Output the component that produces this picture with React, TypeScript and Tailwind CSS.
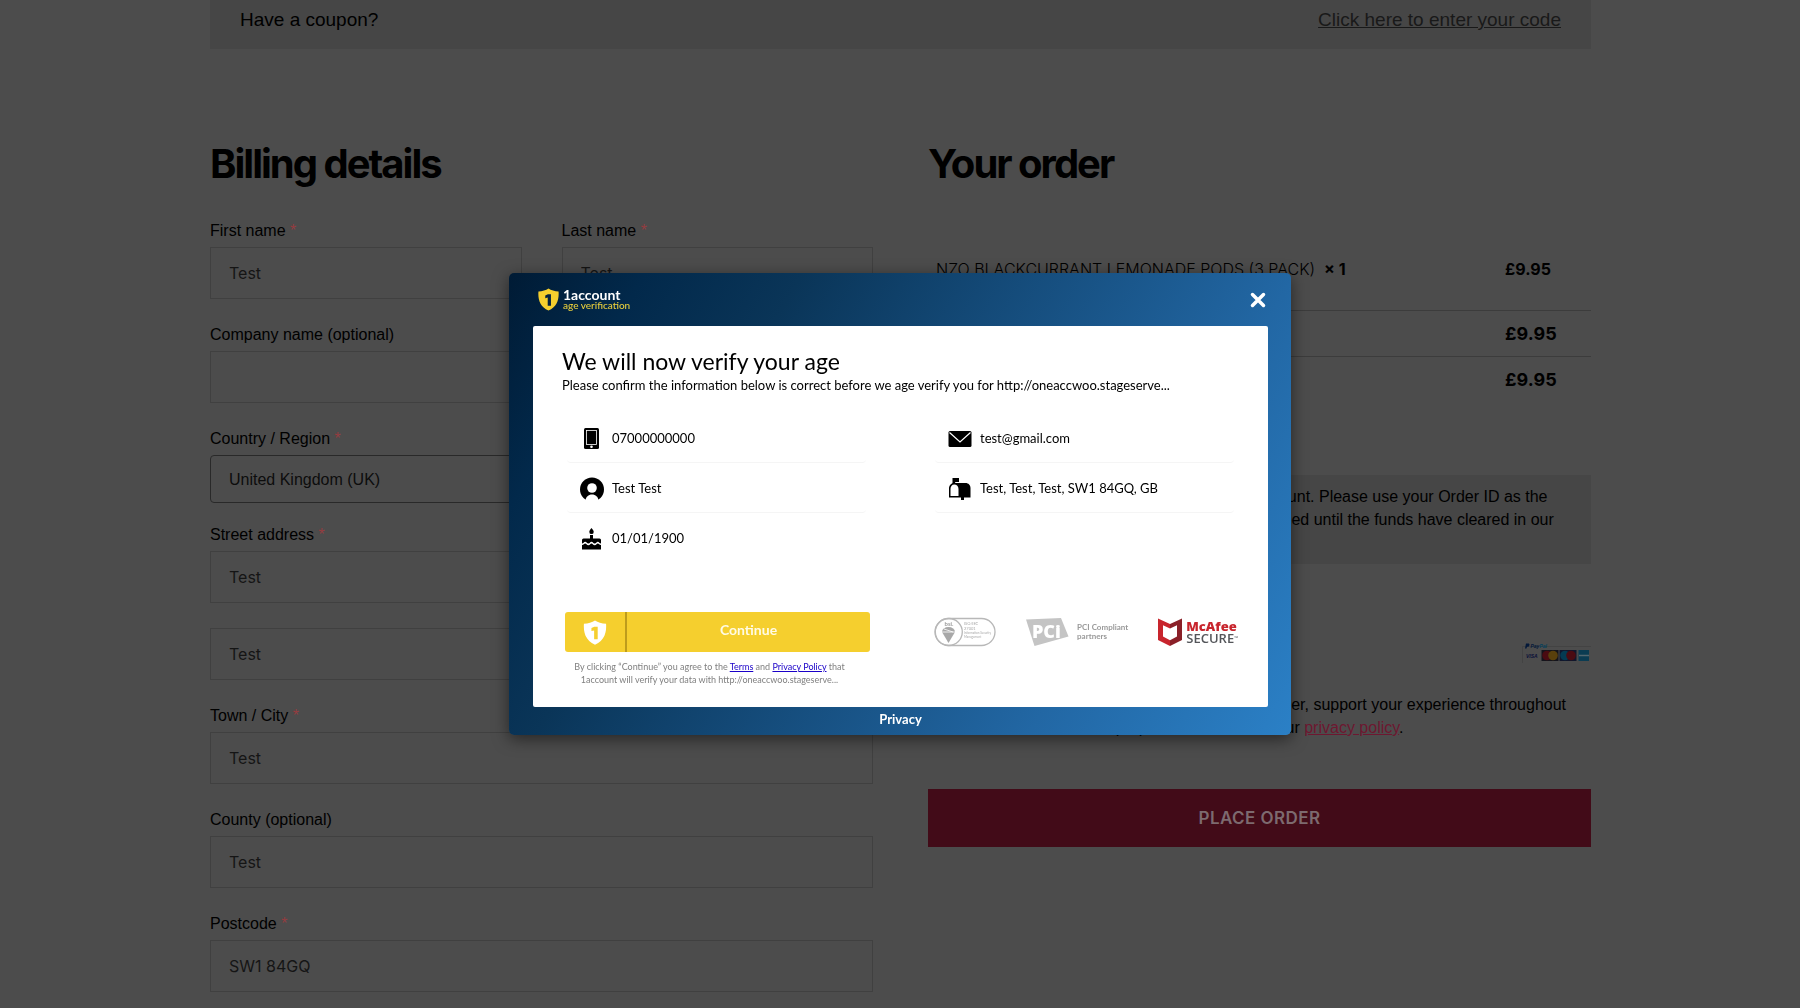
import React from "react";

const arial = "font-['Liberation_Sans',Arial,sans-serif]";
const inter = "font-['Inter',sans-serif]";
const lato = "font-['Lato',sans-serif]";

function Label({ id, text, required }: { id: string; text: string; required?: boolean }) {
  return (
    <label htmlFor={id} className="mb-[3px] block text-base leading-[26px] text-black">
      {text}
      {required && <span className="text-[#943c40]"> *</span>}
    </label>
  );
}

function Field({
  id,
  text,
  value,
  required,
}: {
  id: string;
  text?: string;
  value: string;
  required?: boolean;
}) {
  return (
    <div>
      {text && <Label id={id} text={text} required={required} />}
      <input
        id={id}
        aria-label={text ? undefined : "Street address line 2"}
        defaultValue={value}
        className={`${inter} h-[52px] w-full border border-[#404040] bg-transparent px-[18px] text-base text-[#151515] outline-none`}
      />
    </div>
  );
}

function Shield({ className, one }: { className: string; one: string }) {
  return (
    <svg viewBox="0 0 24 26" className={className} aria-hidden="true">
      <path
        fill="currentColor"
        d="M12 0.5c3 2 7 3.2 11.500 3.400c0.700 9.200-1.800 17.600-11.500 21.800C2.300 21.500-0.200 13.100 0.500 3.900C5 3.700 9 2.500 12 0.500z"
      />
      <path fill={one} d="M11.300 7h3.500v13h-3.700v-9.200l-2.800 0.700v-3.100z" />
    </svg>
  );
}

function PhoneIcon() {
  return (
    <svg viewBox="0 0 24 24" className="size-6" aria-hidden="true">
      <rect x="4" y="1" width="15" height="21" rx="1.500" />
      <rect x="6.500" y="3.500" width="10" height="14" fill="none" stroke="#fff" strokeWidth="0.800" />
      <circle cx="11.500" cy="19.800" r="1.300" fill="#fff" />
    </svg>
  );
}

function PersonIcon() {
  return (
    <svg viewBox="0 0 24 24" className="size-6" aria-hidden="true">
      <circle cx="12" cy="12.500" r="12" />
      <circle cx="12" cy="11" r="4.800" fill="#fff" />
      <path d="M5.200 24.500c0.500-4.500 3-7 6.800-7s6.300 2.500 6.800 7z" fill="#fff" />
      <path d="M4 23h16v2H4z" fill="#fff" />
    </svg>
  );
}

function CakeIcon() {
  return (
    <svg viewBox="0 0 24 24" className="size-6" aria-hidden="true">
      <path d="M11.500 1c1.500 1.600 2.200 2.800 2.200 3.900a2.200 2.200 0 0 1-4.400 0c0-1.100 0.700-2.300 2.200-3.900z" />
      <path d="M10 8h3v3.500h6.500q1.500 0 1.500 1.500v3.500c-1.600 0-1.800-1.800-3.200-1.800s-1.600 1.800-3.100 1.800-1.600-1.800-3.200-1.800-1.600 1.800-3.100 1.800-1.700-1.800-3.200-1.800S3.500 16.500 2 16.500V13q0-1.500 1.500-1.500H10z" />
      <path d="M2 18c1.600 0 2.200-1.500 3.200-1.500s1.500 1.700 3.200 1.700 2.100-1.700 3.100-1.700 1.500 1.700 3.200 1.700 2.100-1.700 3.100-1.700S19.400 18 21 18v4.500H2z" />
    </svg>
  );
}

function MailIcon() {
  return (
    <svg viewBox="0 0 24 24" className="size-6" aria-hidden="true">
      <rect x="0.500" y="4" width="23" height="16" rx="1.500" />
      <path d="M1.500 5.500l10.500 9.500 10.500-9.500" fill="none" stroke="#fff" strokeWidth="1.200" />
    </svg>
  );
}

function MailboxIcon() {
  return (
    <svg viewBox="0 0 24 24" className="size-6" aria-hidden="true">
      <path d="M4.500 1h6.500v4h-3.800v3H4.500z" />
      <path d="M6 6h11.500c3 0 5 2.200 5 5v9.500H16V23h-3v-2.500H1V11.500C1 8.500 3 6 6 6z" />
      <path d="M6.300 7.500c2.500 0 4.200 1.800 4.200 4.500v7H2.500v-7c0-2.700 1.500-4.500 3.800-4.500z" fill="#fff" />
    </svg>
  );
}

function Detail({ icon, text, last }: { icon: React.ReactNode; text: string; last?: boolean }) {
  return (
    <li
      className={`flex h-[50px] items-center gap-2 rounded-sm pt-0.5 pl-[13px] text-[13px] ${
        last ? "" : "border-b border-[#f5f5f5]"
      }`}
    >
      {icon}
      {text}
    </li>
  );
}

function BsiLogo() {
  return (
    <svg viewBox="0 0 62 30" className="h-[30px] w-[62px]" role="img" aria-label="bsi ISO/IEC 27001">
      <rect x="1" y="1.500" width="60" height="27" rx="13.500" fill="#fff" stroke="#b8b8b8" strokeWidth="1.300" />
      <circle cx="14.800" cy="15" r="13.500" fill="none" stroke="#b8b8b8" strokeWidth="1.300" />
      <text x="10.500" y="8.500" fontSize="6" fontWeight="700" fill="#a0a0a0">bsi.</text>
      <path d="M8 15a6.500 5 0 0 1 13 0l-6.500 11z" fill="#a8a8a8" />
      <path d="M7 15h15M10 12l9 3" stroke="#fff" strokeWidth="0.800" />
      <g fontSize="3" fill="#a8a8a8">
        <text x="30" y="8" fontSize="4">ISO/IEC</text>
        <text x="30" y="12.500" fontSize="4">27001</text>
        <text x="30" y="16.500">Information Security</text>
        <text x="30" y="20.500">Management</text>
      </g>
    </svg>
  );
}

function PciLogo() {
  return (
    <div className="flex items-center gap-2">
      <svg viewBox="0 0 43 30" className="h-[30px] w-[43px]" role="img" aria-label="PCI">
        <path d="M0 2.500L35 1l7.500 18.500L8.500 29z" fill="#c4c4c4" />
        <text x="6" y="21" fontSize="18" fontWeight="800" fontFamily="Open Sans" fill="#fff">PCi</text>
      </svg>
      <span className="text-[8px] leading-[9px] font-bold text-[#9a9a9a]">
        PCI Compliant
        <br />
        partners
      </span>
    </div>
  );
}

function McAfeeLogo() {
  return (
    <div className="flex items-center gap-1">
      <svg viewBox="0 0 24 28" className="h-7 w-6" aria-hidden="true">
        <path d="M0 0.500l12 5.500v4.500L5 7.300v11.200l7 3.800V28L0 22z" fill="#c8252d" />
        <path d="M24 0.500L12 6v4.500l7-3.200v11.200l-7 3.800V28l12-6z" fill="#8a2028" />
      </svg>
      <span className="font-['Open_Sans',sans-serif] text-[13px] leading-3 font-semibold text-[#54565a]">
        <span className="block font-extrabold text-[#c8252d]">McAfee</span>
        SECURE<span className="align-top text-[5px]">™</span>
      </span>
    </div>
  );
}

function PaymentCards() {
  return (
    <svg viewBox="0 0 69 20" className="h-5 w-[69px]" role="img" aria-label="PayPal, Visa, Mastercard, Maestro, American Express">
      <path d="M0.500 20V3.500H69" fill="none" stroke="#434343" />
      <path d="M4 0.500h3q1.500 1.500-0.500 3.200H5L4.500 5.500H3z" fill="#04193a" />
      <g fontFamily="Liberation Sans" fontWeight="700" fontStyle="italic">
        <text x="8.500" y="5" fontSize="5" fill="#04193a">Pay<tspan fill="#04405c">Pal</tspan></text>
        <text x="4" y="14.500" fontSize="5" fill="#0a0f38">VISA</text>
      </g>
      <rect x="19.500" y="7" width="17" height="11" fill="#14141c" />
      <circle cx="25" cy="12.500" r="4.800" fill="#4a0b12" />
      <circle cx="31" cy="12.500" r="4.800" fill="#59400c" />
      <rect x="37.500" y="7" width="17" height="11" fill="#10162c" />
      <circle cx="43" cy="12.500" r="4.800" fill="#043a52" />
      <circle cx="49" cy="12.500" r="4.800" fill="#4a0b12" />
      <rect x="56.500" y="7" width="10.500" height="11" fill="#0b3c52" />
      <path d="M57 12.500h10" stroke="#52676f" strokeWidth="1.500" />
    </svg>
  );
}

function BillingForm() {
  return (
    <form>
      <h2 className={`${inter} mb-[30px] text-[40px] leading-12 font-bold tracking-tighter text-black`}>Billing details</h2>
      <div className="flex flex-col gap-[23px]">
        <div className="grid grid-cols-2 gap-10">
          <Field id="first" text="First name" value="Test" required />
          <Field id="last" text="Last name" value="Test" required />
        </div>
        <Field id="company" text="Company name (optional)" value="" />
        <div className="flex flex-col gap-[19px]">
          <div>
            <Label id="country" text="Country / Region" required />
            <select
              id="country"
              className="h-12 w-full appearance-none rounded border border-[#292929] bg-transparent px-[18px] pt-0.5 text-base text-[#0d0d0d]"
            >
              <option>United Kingdom (UK)</option>
            </select>
          </div>
          <div className="flex flex-col gap-[25px]">
            <Field id="street" text="Street address" value="Test" required />
            <Field id="street2" value="Test" />
          </div>
        </div>
        <Field id="town" text="Town / City" value="Test" required />
        <Field id="county" text="County (optional)" value="Test" />
        <Field id="postcode" text="Postcode" value="SW1 84GQ" required />
      </div>
    </form>
  );
}

function Order() {
  return (
    <section className="text-base leading-[23px]">
      <h2 className={`${inter} mb-7 text-[40px] leading-12 font-bold tracking-tighter text-black`}>Your order</h2>
      <table className={`${inter} w-full text-left text-black`}>
        <tbody>
          <tr className="h-[94px] border-b border-[#3c3c3c]">
            <td className="pt-3 pl-2 text-base font-light">
              NZO BLACKCURRANT LEMONADE PODS (3 PACK)&nbsp; <strong className="font-bold">× 1</strong>
            </td>
            <td className="w-[86px] pt-3 text-base font-bold">£9.95</td>
          </tr>
          <tr className="h-[46px] border-b border-[#3c3c3c] text-lg font-bold">
            <th className="pt-0.5 pl-2">Subtotal</th>
            <td className="pt-0.5">£9.95</td>
          </tr>
          <tr className="h-[46px] text-lg font-bold">
            <th className="pt-0.5 pl-2">Total</th>
            <td className="pt-0.5">£9.95</td>
          </tr>
        </tbody>
      </table>
      <div className="mt-[73px] bg-[#464646] px-[29px] pt-[10px] pb-[10px] text-black">
        Make your payment directly into our bank account. Please use your Order ID as the payment reference. Your
        order will not be shipped until the funds have cleared in our account.
      </div>
      <div className="mt-[79px] flex justify-end">
        <PaymentCards />
      </div>
      <p className="mt-[30px] text-black">
        Your personal data will be used to process your order, support your experience throughout this website, and
        for other purposes described in our{" "}
        <a href="#privacy" className="text-[#6e1730] underline">privacy policy</a>.
      </p>
      <button
        type="button"
        className={`${inter} mt-[50px] h-[58px] w-full bg-[#420b18] text-[17px] font-semibold tracking-wide text-[#7d6a6f]`}
      >
        PLACE ORDER
      </button>
    </section>
  );
}

function VerifyDialog() {
  return (
    <div className="fixed inset-0 flex items-center justify-center">
      <div
        role="dialog"
        aria-labelledby="verify-title"
        className={`${lato} w-[782px] rounded-[5px] bg-[linear-gradient(120deg,#001b35_0%,#02294b_13%,#0a3558_28%,#10426c_40%,#2267a4_75%,#2b80c6_100%)] pr-[23px] pl-6 shadow-[0_4px_16px_rgba(0,0,0,0.5)]`}
      >
        <header className="flex h-[53px] items-center justify-between pr-0.5 pl-[5px]">
          <div className="flex items-center gap-1">
            <Shield className="h-[23px] w-[21px] text-[#f5cf2e]" one="#03223f" />
            <div>
              <div className="text-sm leading-3 font-bold text-white">1account</div>
              <div className="text-[10px] leading-[9px] font-medium text-[#e9cf3c]">age verification</div>
            </div>
          </div>
          <button type="button" aria-label="Close" className="text-white">
            <svg viewBox="0 0 16 16" className="size-4" aria-hidden="true">
              <path d="M2.500 2.500l11 11M13.500 2.500l-11 11" stroke="currentColor" strokeWidth="3.500" strokeLinecap="round" />
            </svg>
          </button>
        </header>
        <main className="rounded-[2px] bg-white pt-[21px] pr-[30px] pb-[21px] pl-[29px]">
          <h1 id="verify-title" className="text-[23px] leading-7 text-black">We will now verify your age</h1>
          <p className="text-[13px] leading-5 text-black">
            Please confirm the information below is correct before we age verify you for http://oneaccwoo.stageserve...
          </p>
          <div className="mt-[18px] grid grid-cols-2 gap-[69px] pr-1 pl-[5px] text-black">
            <ul>
              <Detail icon={<PhoneIcon />} text="07000000000" />
              <Detail icon={<PersonIcon />} text="Test Test" />
              <Detail icon={<CakeIcon />} text="01/01/1900" last />
            </ul>
            <ul>
              <Detail icon={<MailIcon />} text="test@gmail.com" />
              <Detail icon={<MailboxIcon />} text="Test, Test, Test, SW1 84GQ, GB" />
            </ul>
          </div>
          <div className="mt-[49px] flex items-start justify-between pl-[3px]">
            <div className="w-[305px]">
              <button
                type="button"
                className="flex h-10 w-full items-stretch rounded-[3px] bg-[#f5cf2e] text-sm font-bold text-[#fffbe6]"
              >
                <span className="flex w-[62px] items-center justify-center border-r-2 border-[#bd9c1c]">
                  <Shield className="h-[25px] w-6 text-white" one="#f5cf2e" />
                </span>
                <span className="flex grow items-center justify-center pb-1">Continue</span>
              </button>
              <p className="mt-2 pr-4 text-center text-[9px] leading-[13px] text-[#808080]">
                By clicking “Continue” you agree to the{" "}
                <a href="#terms" className="text-[#1a00c8] underline">Terms</a> and{" "}
                <a href="#policy" className="text-[#1a00c8] underline">Privacy Policy</a> that
                <br />
                1account will verify your data with http://oneaccwoo.stageserve...
              </p>
            </div>
            <div className="flex h-10 w-[304px] items-center justify-between">
              <BsiLogo />
              <PciLogo />
              <McAfeeLogo />
            </div>
          </div>
        </main>
        <footer className="flex h-7 items-start justify-center pt-1 text-[13px] leading-4 font-bold text-white">
          <a href="#privacy">Privacy</a>
        </footer>
      </div>
    </div>
  );
}

export default function App() {
  return (
    <div className={`${arial} min-h-screen bg-[#4c4c4c] pr-[209px] pl-[210px]`}>
      <div className="flex items-start justify-between bg-[#464646] px-[30px] pt-2 pb-[17px] text-[19px] leading-6">
        <span className="text-black">Have a coupon?</span>
        <a href="#coupon" className="text-[#191919] underline">Click here to enter your code</a>
      </div>
      <div className="grid grid-cols-2 gap-[55px] pt-[91px]">
        <BillingForm />
        <Order />
      </div>
      <VerifyDialog />
    </div>
  );
}
